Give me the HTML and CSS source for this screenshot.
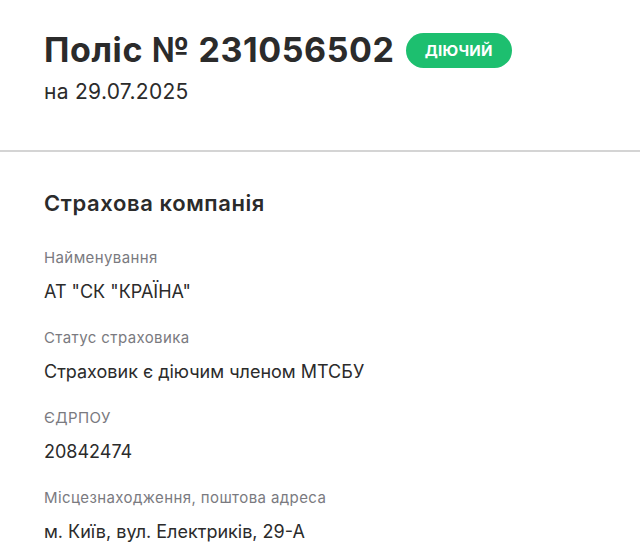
FILE: index.html
```html
<html lang="uk">
<head>
    <meta charset="UTF-8">
    <meta name="viewport" content="width=device-width, initial-scale=1.0">
    <title>Поліс</title>
    <link rel="stylesheet" href="styles.css">
</head>
<body>
    <div class="head">
        <div class="title">
            <h1>Поліс № 231056502</h1>
            <span class="badge">ДІЮЧИЙ</span>
        </div>
        <div class="date">на 29.07.2025</div>
    </div>
    <div class="section">
        <h2>Страхова компанія</h2>
        <div class="field">
            <div class="label">Найменування</div>
            <div class="value">АТ "СК "КРАЇНА"</div>
        </div>
        <div class="field">
            <div class="label">Статус страховика</div>
            <div class="value">Страховик є діючим членом МТСБУ</div>
        </div>
        <div class="field">
            <div class="label">ЄДРПОУ</div>
            <div class="value">20842474</div>
        </div>
        <div class="field">
            <div class="label">Місцезнаходження, поштова адреса</div>
            <div class="value">м. Київ, вул. Електриків, 29-А</div>
        </div>
    </div>
</body>
</html>
```

FILE: styles.css
```css
*{
    margin: 0; padding: 0;
    box-sizing: border-box;
    font-family: Inter, "Open Sans", sans-serif;
}
body{
    background: #fff;
    color: #2b2b2b;
}
.head{
    padding: 30px 44px 0;
    height: 152px;
    border-bottom: 2px solid #d4d4d4;
}
.title{
    display: flex;
    align-items: center;
    gap: 11px;
}
h1{
    font-size: 34px;
    font-weight: 700;
    line-height: 40px;
    letter-spacing: 0.6px;
}
.badge{
    background: #1dbf6f;
    color: #fff;
    font-size: 15px;
    font-weight: 700;
    letter-spacing: 0.3px;
    border-radius: 18px;
    padding: 0 19px;
    height: 35px;
    line-height: 35px;
}
.date{
    font-size: 21px;
    letter-spacing: 0.3px;
    margin-top: 9px;
}
.section{
    padding: 36px 44px 0;
}
h2{
    font-size: 22px;
    font-weight: 600;
    letter-spacing: 0.6px;
    line-height: 30px;
    margin-bottom: 28px;
}
.field{
    margin-bottom: 21px;
}
.label{
    font-size: 15px;
    letter-spacing: 0.4px;
    color: #7a7a80;
    line-height: 24px;
}
.value{
    font-size: 18px;
    line-height: 26px;
    margin-top: 9px;
}
```
